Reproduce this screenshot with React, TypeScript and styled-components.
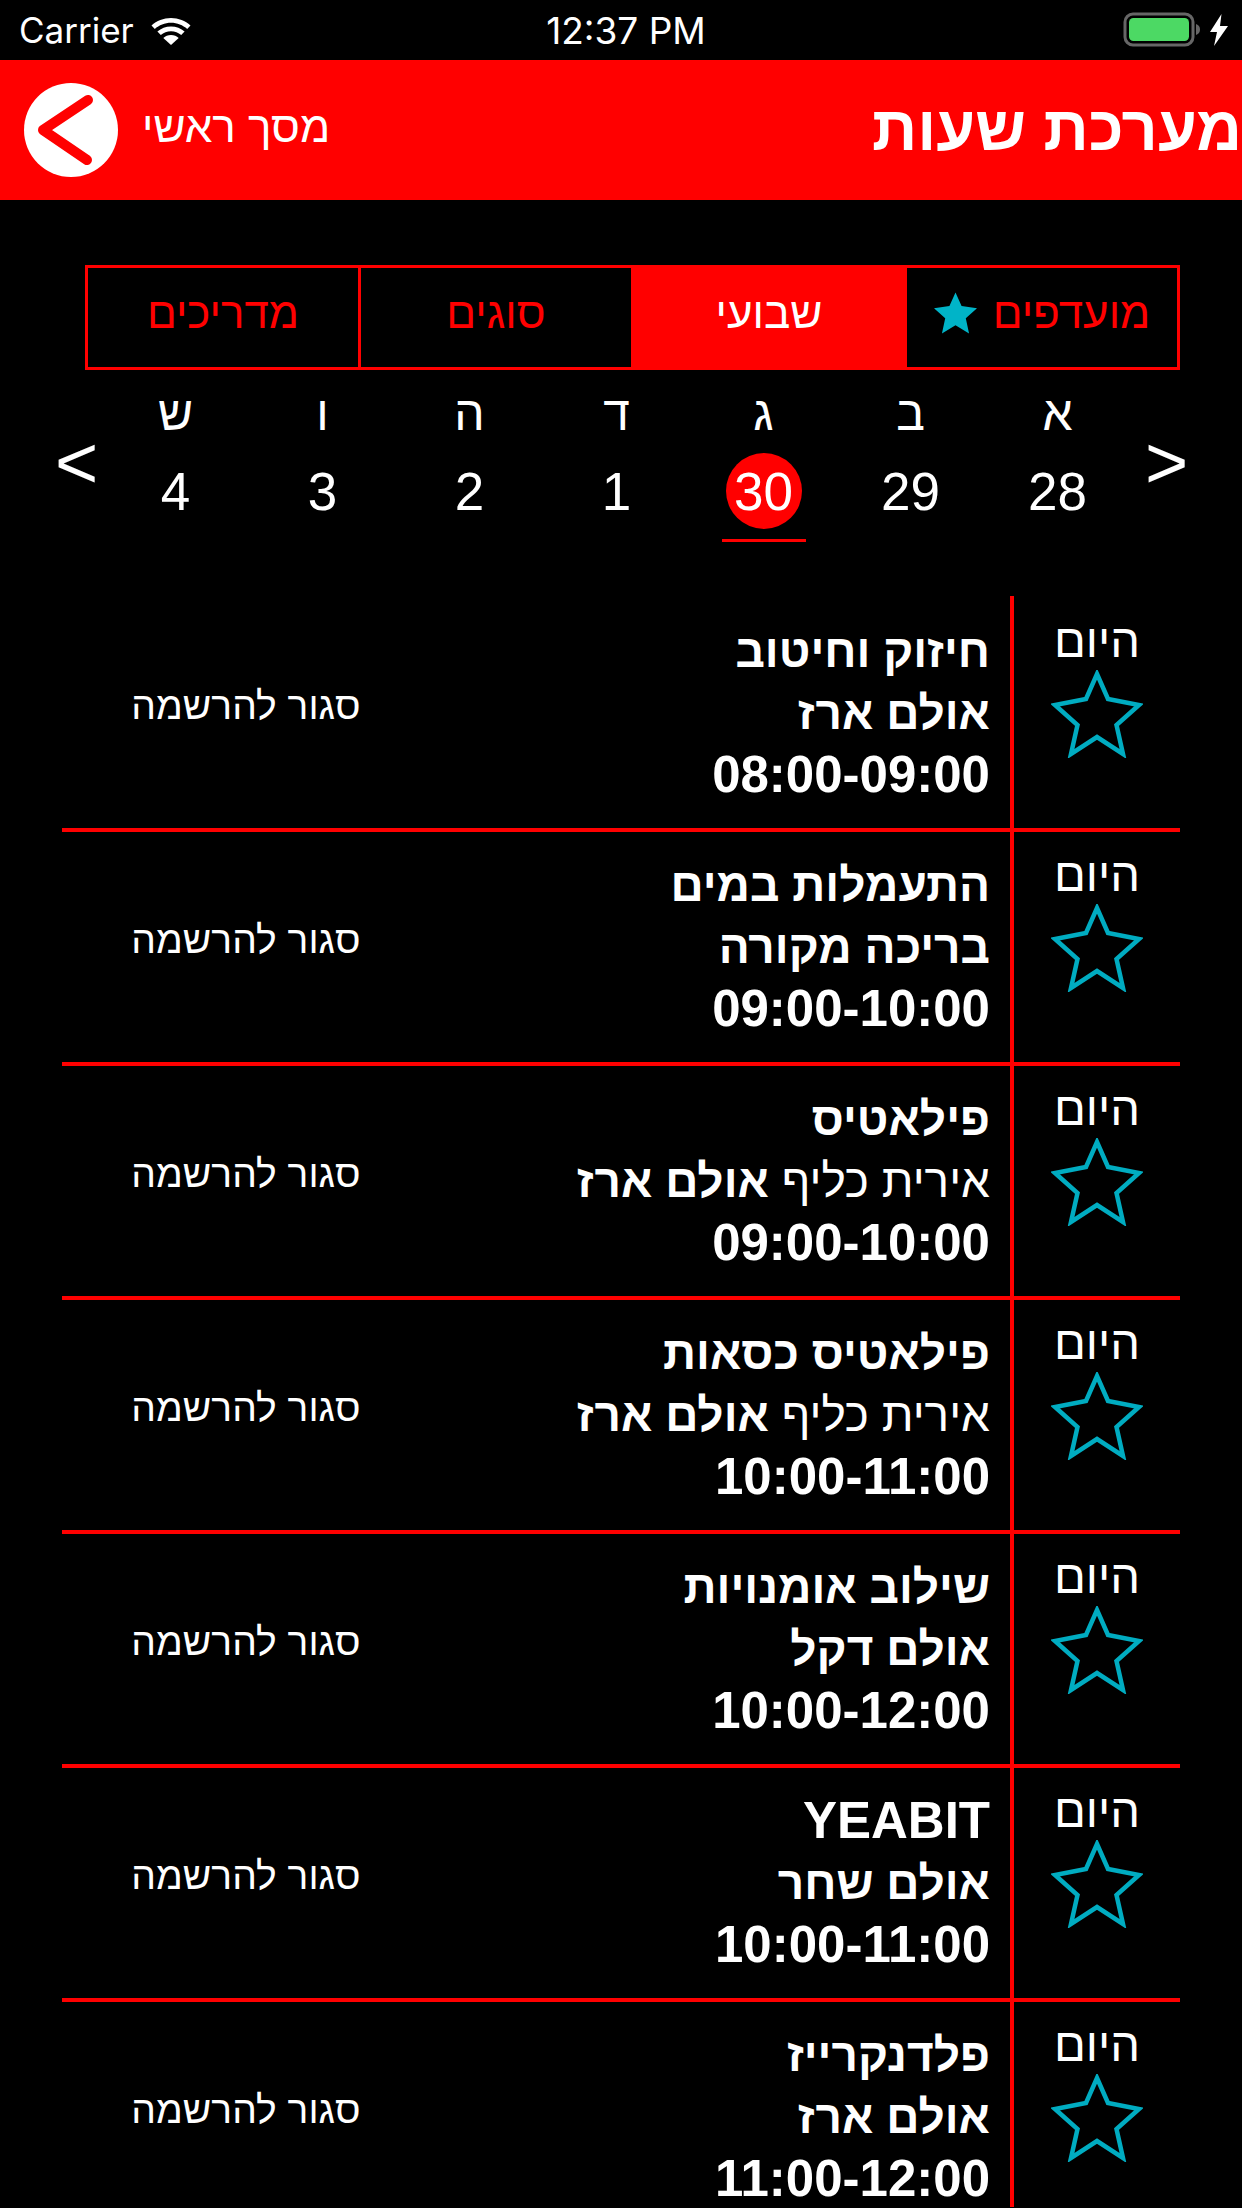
import React from "react";
import styled, { createGlobalStyle } from "styled-components";

const Global = createGlobalStyle`
  html, body { margin: 0; padding: 0; background: #000; }
  body { width: 1242px; height: 2208px; overflow: hidden; font-family: "Liberation Sans", Arial, sans-serif; color: #fff; }
`;

const Page = styled.div`
  width: 1242px;
  height: 2208px;
  overflow: hidden;
  background: #000;
  display: flex;
  flex-direction: column;
`;

const StatusBar = styled.div`
  height: 60px;
  display: grid;
  grid-template-columns: 1fr auto 1fr;
  align-items: center;
  padding: 0 14px 0 19px;
  font-family: Inter, "Liberation Sans", sans-serif;
  color: #fff;
`;
const StatusLeft = styled.div`
  display: flex;
  align-items: center;
  gap: 16px;
  font-size: 35px;
`;
const Clock = styled.span`
  font-size: 37px;
  margin-left: 5px;
`;
const StatusRight = styled.div`
  display: flex;
  align-items: center;
  justify-content: flex-end;
  gap: 7px;
`;

const Header = styled.header`
  height: 140px;
  background: #ff0000;
  display: flex;
  align-items: center;
  justify-content: space-between;
  padding: 0 0 0 24px;
`;
const BackGroup = styled.div`
  display: flex;
  align-items: center;
  gap: 24px;
`;
const BackLabel = styled.span`
  direction: rtl;
  font-size: 44px;
  margin-top: -6px;
`;
const Title = styled.h1`
  direction: rtl;
  margin: -4px 0 0;
  font-size: 63px;
  font-weight: 700;
`;

const Tabs = styled.nav`
  direction: rtl;
  margin: 65px 62px 0 85px;
  height: 105px;
  box-sizing: border-box;
  border: 3px solid #ff0000;
  display: grid;
  grid-template-columns: 273px 273px 273px 270px;
`;
const Tab = styled.div<{ $active?: boolean; $last?: boolean }>`
  display: flex;
  align-items: center;
  justify-content: center;
  gap: 16px;
  font-size: 44px;
  padding-bottom: 10px;
  color: ${(p) => (p.$active ? "#fff" : "#ff0000")};
  background: ${(p) => (p.$active ? "#ff0000" : "transparent")};
  border-left: ${(p) => (p.$last ? "0" : "3px solid #ff0000")};
`;

const WeekRow = styled.div`
  height: 210px;
  margin: 15px 59px 0 55px;
  display: flex;
  align-items: flex-start;
  justify-content: space-between;
`;
const Arrow = styled.span`
  font-size: 74px;
  line-height: 64px;
  margin-top: 46px;
  width: 38px;
  text-align: center;
`;
const Days = styled.div`
  direction: rtl;
  flex: 1;
  display: grid;
  grid-template-columns: repeat(7, 147px);
  justify-content: center;
  margin-right: 5px;
`;
const Day = styled.div`
  display: flex;
  flex-direction: column;
  align-items: center;
`;
const DayLetter = styled.div`
  font-size: 48px;
  line-height: 50px;
  height: 50px;
  margin-top: 4px;
`;
const DayNumber = styled.div<{ $active?: boolean }>`
  width: 76px;
  height: 76px;
  margin-top: 14px;
  border-radius: 50%;
  display: flex;
  align-items: center;
  justify-content: center;
  font-size: 53px;
  background: ${(p) => (p.$active ? "#ff0000" : "transparent")};
`;
const DayLine = styled.div<{ $active?: boolean }>`
  width: 84px;
  height: 3px;
  margin-top: 10px;
  background: ${(p) => (p.$active ? "#ff0000" : "transparent")};
`;

const List = styled.div`
  direction: rtl;
  margin: 1px 62px 0 62px;
`;
const Row = styled.div`
  --top: 0px;
  height: 230px;
  display: grid;
  grid-template-columns: 166px 4px 1fr;
  border-bottom: 4px solid #ff0000;
  &:first-child {
    --top: 2px;
    height: 232px;
  }
  &:last-child {
    border-bottom: 0;
    height: 197px;
  }
`;
const TodayCol = styled.div`
  display: flex;
  flex-direction: column;
  align-items: center;
  padding-top: calc(18px + var(--top));
`;
const Today = styled.div`
  font-size: 47px;
  line-height: 50px;
`;
const Divider = styled.div`
  background: #ff0000;
`;
const Body = styled.div`
  display: grid;
  grid-template-columns: 1fr 368px;
  align-items: start;
  padding-right: 20px;
`;
const Info = styled.div`
  display: flex;
  flex-direction: column;
  padding-top: calc(22px + var(--top));
`;
const Line = styled.div<{ $big?: boolean }>`
  font-size: ${(p) => (p.$big ? "51px" : "46px")};
  line-height: 62px;
  font-weight: 700;
  white-space: nowrap;
  height: 62px;
`;
const TimeLine = styled.div`
  font-size: 51px;
  line-height: 56px;
  height: 56px;
  margin-top: 3px;
  font-weight: 700;
  white-space: nowrap;
`;
const Thin = styled.span`
  font-weight: 400;
`;
const Closed = styled.div`
  font-size: 39px;
  line-height: 46px;
  text-align: center;
  padding-top: calc(85px + var(--top));
`;
const RowStar = styled.svg`
  width: 92px;
  height: 88px;
  margin-top: 4px;
`;

const StarOutline = () => (
  <RowStar viewBox="0 0 92 88">
    <polygon
      points="46,4 57,29 88,35 65.500,55 72,84 46,67 20,84 26.500,55 4,35 35,29"
      fill="none"
      stroke="#00acc1"
      strokeWidth="4.5"
      strokeLinejoin="miter"
    />
  </RowStar>
);
const StarFilled = () => (
  <svg width="43" height="42" viewBox="0 0 92 88">
    <polygon points="46,0 59,29 92,34 68,55 75,88 46,70 17,88 24,55 0,34 33,29" fill="#00b4c8" />
  </svg>
);

const Wifi = () => (
  <svg width="42" height="30" viewBox="0 0 42 30" fill="#fff">
    <path d="M21 3C13.500 3 6.700 5.800 1.500 10.500l3.300 3.400C9.100 10.100 14.800 7.700 21 7.700s11.900 2.400 16.200 6.200l3.300-3.400C35.300 5.800 28.500 3 21 3z" />
    <path d="M21 11.500c-5.200 0-9.900 1.900-13.600 5.100l3.400 3.400c2.800-2.300 6.300-3.700 10.200-3.700s7.400 1.400 10.200 3.700l3.400-3.400c-3.700-3.200-8.400-5.100-13.600-5.100z" />
    <path d="M21 20c-3 0-5.700 1.100-7.700 2.900L21 30l7.700-7.100C26.700 21.100 24 20 21 20z" />
  </svg>
);
const Battery = () => (
  <svg width="80" height="36" viewBox="0 0 80 36">
    <rect x="2" y="2" width="68" height="31" rx="8" fill="none" stroke="#666" strokeWidth="3" />
    <rect x="6" y="6" width="60" height="23" rx="4.500" fill="#4cd964" />
    <path d="M73 12c3 1 4 3 4 5.500s-1 4.500-4 5.500z" fill="#666" />
  </svg>
);
const Bolt = () => (
  <svg width="18" height="32" viewBox="0 0 18 32">
    <path d="M11.500 0L0 18h7L4 32 18 12h-8z" fill="#fff" />
  </svg>
);
const BackIcon = () => (
  <svg width="94" height="94" viewBox="0 0 94 94">
    <circle cx="47" cy="47" r="47" fill="#fff" />
    <path d="M64 17L19 47l44 30" fill="none" stroke="#ff0000" strokeWidth="10" strokeLinecap="round" strokeLinejoin="round" />
  </svg>
);

const days = [
  ["א", "28"],
  ["ב", "29"],
  ["ג", "30"],
  ["ד", "1"],
  ["ה", "2"],
  ["ו", "3"],
  ["ש", "4"],
];

type Item = { title: string; teacher?: string; place: string; time: string; latin?: boolean };
const items: Item[] = [
  { title: "חיזוק וחיטוב", place: "אולם ארז", time: "08:00-09:00" },
  { title: "התעמלות במים", place: "בריכה מקורה", time: "09:00-10:00" },
  { title: "פילאטיס", teacher: "אירית כליף", place: "אולם ארז", time: "09:00-10:00" },
  { title: "פילאטיס כסאות", teacher: "אירית כליף", place: "אולם ארז", time: "10:00-11:00" },
  { title: "שילוב אומנויות", place: "אולם דקל", time: "10:00-12:00" },
  { title: "YEABIT", place: "אולם שחר", time: "10:00-11:00", latin: true },
  { title: "פלדנקרייז", place: "אולם ארז", time: "11:00-12:00" },
];

export default function App() {
  return (
    <Page>
      <Global />
      <StatusBar>
        <StatusLeft>
          <span>Carrier</span>
          <Wifi />
        </StatusLeft>
        <Clock>12:37 PM</Clock>
        <StatusRight>
          <Battery />
          <Bolt />
        </StatusRight>
      </StatusBar>
      <Header>
        <BackGroup>
          <BackIcon />
          <BackLabel>מסך ראשי</BackLabel>
        </BackGroup>
        <Title>מערכת שעות</Title>
      </Header>
      <Tabs>
        <Tab>
          <span>מועדפים</span>
          <StarFilled />
        </Tab>
        <Tab $active>שבועי</Tab>
        <Tab>סוגים</Tab>
        <Tab $last>מדריכים</Tab>
      </Tabs>
      <WeekRow>
        <Arrow>&lt;</Arrow>
        <Days>
          {days.map(([letter, num]) => (
            <Day key={letter}>
              <DayLetter>{letter}</DayLetter>
              <DayNumber $active={num === "30"}>{num}</DayNumber>
              <DayLine $active={num === "30"} />
            </Day>
          ))}
        </Days>
        <Arrow>&gt;</Arrow>
      </WeekRow>
      <List>
        {items.map((it, i) => (
          <Row key={i}>
            <TodayCol>
              <Today>היום</Today>
              <StarOutline />
            </TodayCol>
            <Divider />
            <Body>
              <Info>
                <Line $big={it.latin}>{it.title}</Line>
                <Line>
                  {it.teacher && <Thin>{it.teacher} </Thin>}
                  {it.place}
                </Line>
                <TimeLine>
                  <bdi>{it.time}</bdi>
                </TimeLine>
              </Info>
              <Closed>סגור להרשמה</Closed>
            </Body>
          </Row>
        ))}
      </List>
    </Page>
  );
}
